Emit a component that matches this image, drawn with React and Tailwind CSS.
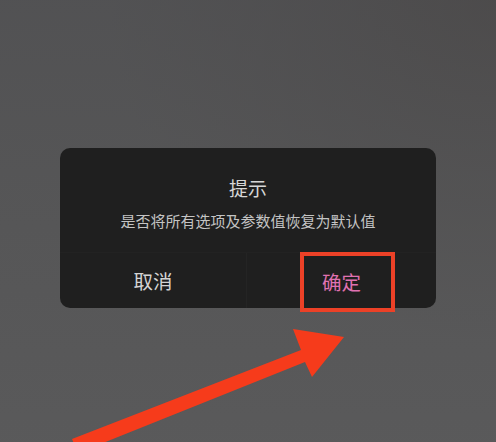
export default function App() {
    const font = { fontFamily: '"Noto Sans CJK SC", "Noto Sans", sans-serif' };

    return (
        <div
            className="relative w-[496px] h-[442px] overflow-hidden bg-[#585859]"
            style={font}
        >
            {/* darker corner at top right */}
            <div className="absolute inset-0 bg-[radial-gradient(ellipse_at_top_right,#47423f_0%,#4f4d4d_25%,transparent_55%)]" />
            <div className="absolute inset-0 bg-gradient-to-b from-[#4f4f51] via-[#555556] to-[#5a5a5b] opacity-70" />

            {/* Dialog */}
            <div className="relative ml-[60px] mt-[148px] w-[376px] h-[160px] rounded-[10px] bg-[#1f1f1f] flex flex-col">
                <div className="pt-[26px] text-center text-[19px] leading-[28px] text-[#d6d6d6]">提示</div>
                <div className="mt-[9px] text-center text-[15px] leading-[20px] text-[#c4c4c4]">
                    是否将所有选项及参数值恢复为默认值
                </div>
                <div className="mt-auto h-[56px] flex border-t border-[#222222]">
                    <div className="w-[187px] flex items-center justify-center text-[19.5px] text-[#d4d4d4] border-r border-[#242424]">
                        取消
                    </div>
                    <div className="flex-1 flex items-center justify-center text-[19.5px] text-[#e072b2] pt-[2px]">
                        确定
                    </div>
                </div>
            </div>

            {/* highlight box */}
            <div className="absolute left-[300px] top-[252px] w-[95px] h-[60px] border-[4px] border-[#ec4127]" />

            {/* arrow */}
            <svg className="absolute left-0 top-0" width="496" height="442" viewBox="0 0 496 442">
                <polygon
                    points="72,439 301,350 293,329 344,337 312,377 305,362 78,453"
                    fill="#f63b1b"
                />
            </svg>
        </div>
    );
}
